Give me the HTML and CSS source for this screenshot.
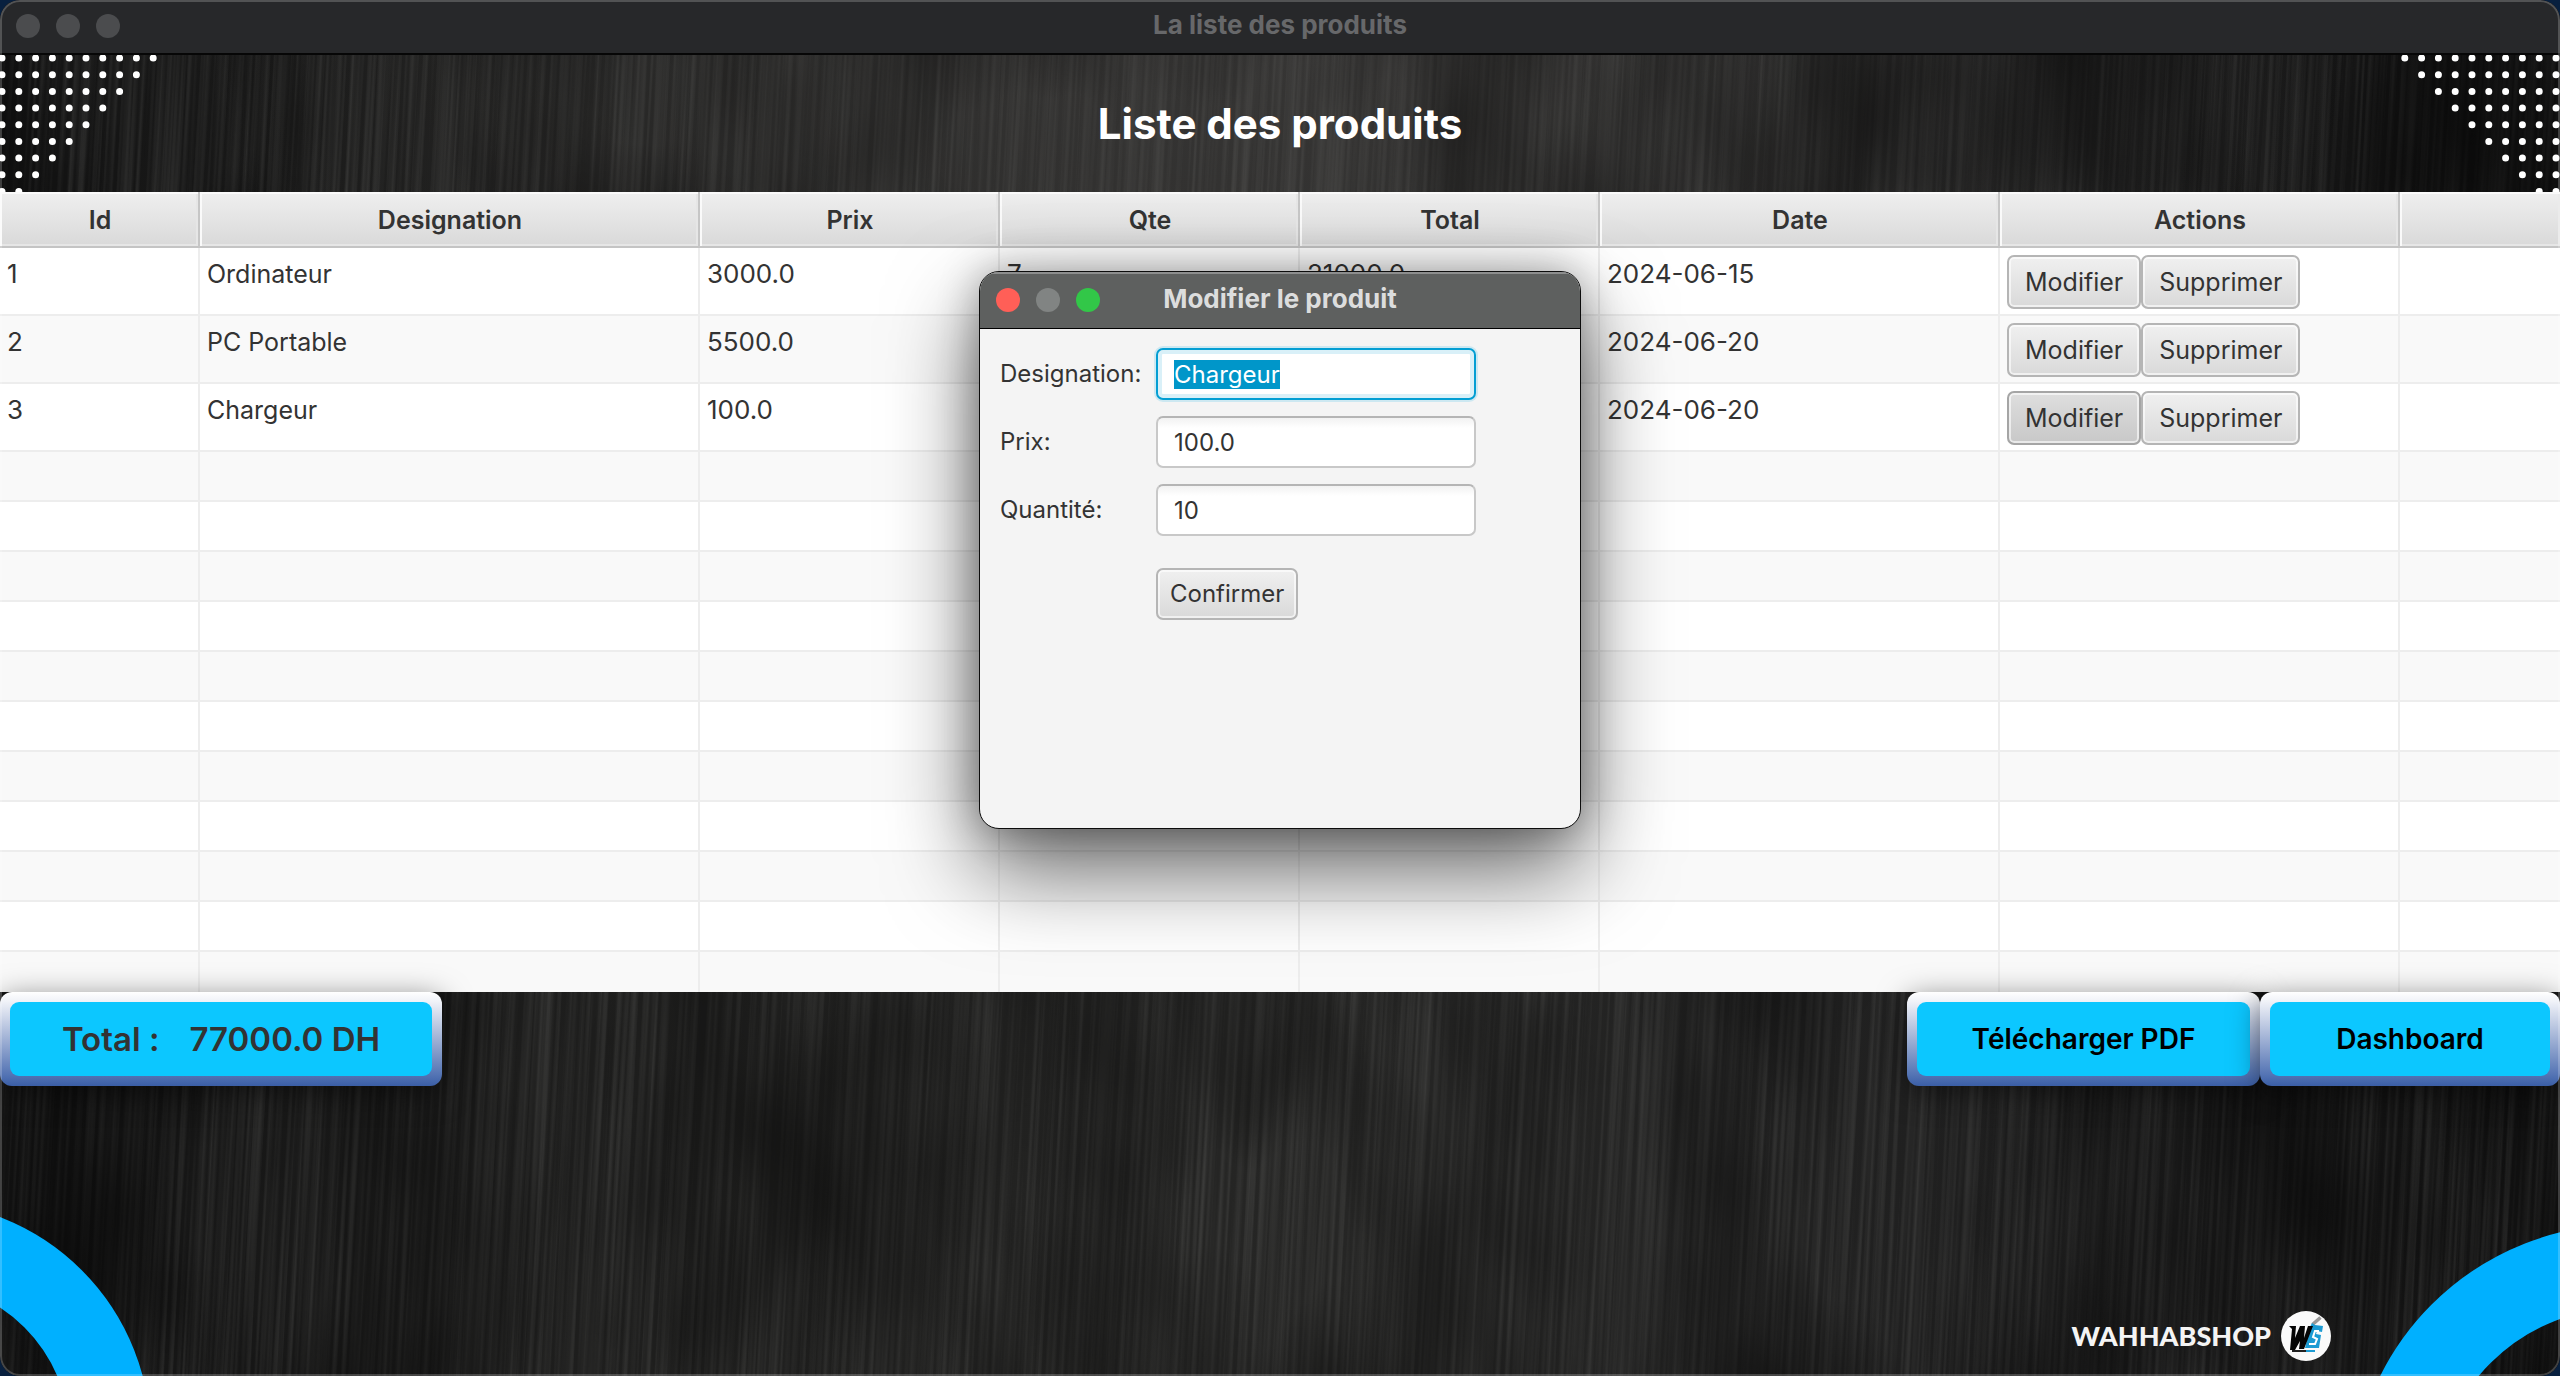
FILE: index.html
```html
<!DOCTYPE html>
<html lang="fr">
<head>
<meta charset="utf-8">
<title>La liste des produits</title>
<link rel="stylesheet" href="styles.css">
</head>
<body>
<main class="window">
  <svg class="wood" aria-hidden="true">
    <defs>
      <filter id="grain" x="0" y="0" width="100%" height="100%" color-interpolation-filters="sRGB">
        <feTurbulence type="fractalNoise" baseFrequency="0.22 0.0015" numOctaves="3" seed="8"/>
        <feColorMatrix type="matrix" values="0 0 0 0 0.45  0 0 0 0 0.45  0 0 0 0 0.44  1 0 0 0 -0.36"/>
      </filter>
      <filter id="clouds" x="0" y="0" width="100%" height="100%" color-interpolation-filters="sRGB">
        <feTurbulence type="fractalNoise" baseFrequency="0.006 0.003" numOctaves="3" seed="3"/>
        <feColorMatrix type="matrix" values="0 0 0 0 0  0 0 0 0 0  0 0 0 0 0  0 1.6 0 0 -0.6"/>
      </filter>
    </defs>
    <rect class="grain" width="110%" height="100%" filter="url(#grain)"/>
    <rect width="100%" height="100%" filter="url(#clouds)"/>
  </svg>

  <header class="titlebar">
    <div class="lights"><i></i><i></i><i></i></div>
    <span class="titlebar-text">La liste des produits</span>
  </header>

  <section class="banner">
    <svg class="dots dots-left" width="170" height="137" aria-hidden="true">
      <g id="dots" fill="none" stroke="#fff" stroke-width="7" stroke-linecap="round" stroke-dasharray="0 16.8">
        <path d="M2 3H154M2 19.700H137M2 36.400H120M2 53H103M2 69.700H87M2 86.400H70M2 103H53M2 119.700H36M2 136.400H19"/>
      </g>
    </svg>
    <h1>Liste des produits</h1>
    <svg class="dots dots-right" width="170" height="137" viewBox="0 0 170 137" aria-hidden="true">
      <use href="#dots" transform="translate(168 0) scale(-1 1)"/>
    </svg>
  </section>

  <section class="table-wrap">
    <table>
      <colgroup><col class="w-id"><col class="w-name"><col class="w-num"><col class="w-num"><col class="w-num"><col class="w-wide"><col class="w-wide"><col></colgroup>
      <thead><tr><th>Id</th><th>Designation</th><th>Prix</th><th>Qte</th><th>Total</th><th>Date</th><th>Actions</th><th></th></tr></thead>
      <tbody>
        <tr class="data"><td>1</td><td>Ordinateur</td><td>3000.0</td><td>7</td><td>21000.0</td><td>2024-06-15</td><td><div class="actions"><button class="btn">Modifier</button><button class="btn">Supprimer</button></div></td><td></td></tr>
        <tr class="data"><td>2</td><td>PC Portable</td><td>5500.0</td><td>10</td><td>55000.0</td><td>2024-06-20</td><td><div class="actions"><button class="btn">Modifier</button><button class="btn">Supprimer</button></div></td><td></td></tr>
        <tr class="data"><td>3</td><td>Chargeur</td><td>100.0</td><td>10</td><td>1000.0</td><td>2024-06-20</td><td><div class="actions"><button class="btn pressed">Modifier</button><button class="btn">Supprimer</button></div></td><td></td></tr>
        <tr><td></td><td></td><td></td><td></td><td></td><td></td><td></td><td></td></tr>
        <tr><td></td><td></td><td></td><td></td><td></td><td></td><td></td><td></td></tr>
        <tr><td></td><td></td><td></td><td></td><td></td><td></td><td></td><td></td></tr>
        <tr><td></td><td></td><td></td><td></td><td></td><td></td><td></td><td></td></tr>
        <tr><td></td><td></td><td></td><td></td><td></td><td></td><td></td><td></td></tr>
        <tr><td></td><td></td><td></td><td></td><td></td><td></td><td></td><td></td></tr>
        <tr><td></td><td></td><td></td><td></td><td></td><td></td><td></td><td></td></tr>
        <tr><td></td><td></td><td></td><td></td><td></td><td></td><td></td><td></td></tr>
        <tr><td></td><td></td><td></td><td></td><td></td><td></td><td></td><td></td></tr>
        <tr><td></td><td></td><td></td><td></td><td></td><td></td><td></td><td></td></tr>
        <tr><td></td><td></td><td></td><td></td><td></td><td></td><td></td><td></td></tr>
      </tbody>
    </table>
  </section>

  <footer class="bottom">
    <svg class="ring ring-left" width="160" height="170" aria-hidden="true"><circle cx="-84" cy="230" r="194" fill="none" stroke="#00b0ff" stroke-width="81"/></svg>
    <svg class="ring ring-right" width="190" height="160" aria-hidden="true"><circle cx="255" cy="282" r="232" fill="none" stroke="#00b0ff" stroke-width="83"/></svg>
    <div class="bar">
      <div class="glossy total"><span>Total :</span><output>77000.0 DH</output></div>
      <div class="links">
        <button class="glossy pdf">Télécharger PDF</button>
        <button class="glossy dash">Dashboard</button>
      </div>
    </div>
    <div class="brand">
      <span>WAHHABSHOP</span>
      <svg width="50" height="50" viewBox="0 0 50 50" aria-hidden="true">
        <circle cx="25" cy="25" r="25" fill="#fafafa"/>
        <path d="M31 13L39 6M32 14L40 7" stroke="#999" stroke-width="2" fill="none"/>
        <path d="M29 16L31 12L34 14L42 15L41 21L36 20L35 23L40 24L38 37H24Z" fill="#1c9bd3"/>
        <path d="M38 20H34L32 26L36 28L34 33H28" stroke="#fff" stroke-width="2" fill="none"/>
        <path d="M8 15H15L14 27L19 15H24L23 27L27 15H32L23 38H18L19 30L14 39H9L11 18Z" fill="#050505"/>
        <path d="M11 40H25" stroke="#222" stroke-width="2"/><path d="M25 40H34" stroke="#1c9bd3" stroke-width="2"/>
      </svg>
    </div>
  </footer>
</main>

<section class="dialog" role="dialog" aria-labelledby="dialog-title">
  <header class="dialog-bar">
    <div class="lights"><i class="red"></i><i class="gray"></i><i class="green"></i></div>
    <h2 id="dialog-title">Modifier le produit</h2>
  </header>
  <form class="form">
    <label for="designation">Designation:</label><input id="designation" type="text" value="Chargeur">
    <label for="prix">Prix:</label><input id="prix" type="text" value="100.0">
    <label for="quantite">Quantité:</label><input id="quantite" type="text" value="10">
    <button class="btn confirm" type="button">Confirmer</button>
  </form>
</section>
<script src="script.js"></script>
</body>
</html>
```
FILE: script.js
```js
const field = document.getElementById("designation");
field.focus();
field.select();
```
FILE: styles.css
```css
* { box-sizing: border-box; }
html, body { height: 100%; }
body {
  margin: 0;
  position: relative;
  background: #08203f;
  color: #333;
  font: 26px/34px Inter, "Liberation Sans", sans-serif;
  overflow: hidden;
}
h1, h2 { margin: 0; }
button { font: inherit; color: inherit; }

.window {
  position: relative;
  min-height: 100%;
  height: 100%;
  display: flex;
  flex-direction: column;
  border-radius: 20px;
  overflow: hidden;
  background:
    radial-gradient(ellipse 42% 60% at 50% 0, #373635 0, rgba(55, 54, 53, 0) 100%),
    linear-gradient(90deg, #141414, #212120 30%, #262625 52%, #202020 75%, #111);
}
.window::after {
  content: "";
  position: absolute;
  inset: 0;
  border: 2px solid rgba(255, 255, 255, 0.2);
  border-radius: 20px;
  pointer-events: none;
}
.wood { position: absolute; inset: 0; width: 100%; height: 100%; opacity: 0.55; }
.grain { transform: skewX(-3deg); transform-origin: 0 0; }

.titlebar {
  position: relative;
  height: 55px;
  flex: none;
  background: #27282a;
  border-bottom: 2px solid #060606;
  display: grid;
  justify-items: center;
}
.titlebar-text { color: #67686a; font-weight: 700; line-height: 50px; }
.lights { position: absolute; left: 16px; top: 14px; display: flex; gap: 16px; }
.lights i { width: 24px; height: 24px; border-radius: 50%; background: #4b4c4e; }

.banner { position: relative; height: 137px; flex: none; display: grid; place-items: center; }
.banner h1 { color: #fff; font-size: 42px; line-height: 56px; }
.dots { position: absolute; top: 0; }
.dots-left { left: 0; }
.dots-right { right: 0; }

.table-wrap { position: relative; flex: 1; min-height: 0; overflow: hidden; background: #fff; }
table { width: 100%; table-layout: fixed; border-collapse: separate; border-spacing: 0; }
.w-id { width: 200px; }
.w-name { width: 500px; }
.w-num { width: 300px; }
.w-wide { width: 400px; }
th {
  height: 56px;
  padding: 2px 0 0 2px;
  font-size: 25px;
  font-weight: 600;
  background: linear-gradient(#efefef, #d9d9d9);
  border-right: 2px solid #c6c6c6;
  border-bottom: 2px solid #c4c4c4;
  box-shadow: inset 2px 2px #fafafa, inset -2px -2px #e6e6e6;
}
td {
  height: 50px;
  padding: 0 0 0 7px;
  vertical-align: top;
  border-right: 2px solid #ededed;
  border-bottom: 2px solid #ededed;
}
th:last-child, td:last-child { border-right: 0; }
tbody tr:nth-child(even) { background: #f9f9f9; }
.data td { height: 68px; padding-top: 9px; }
.data td:nth-child(2) { font-size: 25px; }
.data td:nth-child(7) { padding-top: 7px; }
.actions { display: flex; }
.btn {
  height: 54px;
  padding: 0 16px;
  border: 2px solid #b5b5b5;
  border-radius: 7px;
  background: linear-gradient(#f0f0f0, #d9d9d9);
  box-shadow: inset 0 0 0 2px rgba(255, 255, 255, 0.6);
  font-size: 25px;
}
.btn.pressed { background: linear-gradient(#dedede, #c8c8c8); border-color: #a5a5a5; }

.bottom { position: relative; height: 384px; flex: none; }
.bar { display: flex; justify-content: space-between; }
.links { display: flex; }
.glossy {
  position: relative;
  isolation: isolate;
  height: 94px;
  border: 0;
  border-radius: 12px;
  background: linear-gradient(#fff, #f0f2f8 10%, #5474b4 88%, #3a5ea6);
  box-shadow: 0 6px 30px rgba(0, 0, 0, 0.5);
  font-weight: 600;
}
.glossy::before {
  content: "";
  position: absolute;
  z-index: -1;
  inset: 10px;
  border-radius: 9px;
  background: #0cc7ff;
}
.total { width: 442px; display: flex; align-items: center; justify-content: center; gap: 30px; font-size: 33px; }
.pdf, .dash { color: #000; font-size: 28px; padding: 0; }
.pdf { width: 353px; }
.dash { width: 300px; }
.ring { position: absolute; bottom: 0; }
.ring-left { left: 0; }
.ring-right { right: 0; }
.brand {
  position: absolute;
  right: 229px;
  bottom: 15px;
  display: flex;
  align-items: center;
  gap: 10px;
  color: #f4f4f4;
  font: 900 27px/50px Lato, sans-serif;
}

.dialog {
  position: absolute;
  top: 271px;
  left: 0;
  right: 0;
  width: 602px;
  margin: 0 auto;
  min-height: 558px;
  border: 1px solid #0c0c0c;
  border-radius: 20px;
  background: #f4f4f4;
  overflow: hidden;
  box-shadow: 0 40px 90px rgba(0, 0, 0, 0.6), 0 0 40px rgba(0, 0, 0, 0.3);
}
.dialog-bar {
  position: relative;
  height: 57px;
  background: #5e605f;
  border-bottom: 1px solid #000;
  box-shadow: inset 0 2px #8d8e8e;
  text-align: center;
}
.dialog-bar h2 { font-size: 26px; line-height: 54px; color: #dcdddd; }
.dialog-bar .lights { top: 16px; }
.lights .red { background: #ff5f57; }
.lights .gray { background: #818483; }
.lights .green { background: #32c748; }
.form {
  display: grid;
  grid-template-columns: 136px 320px;
  gap: 16px 20px;
  align-items: center;
  padding: 19px 20px;
}
.form label { font-size: 24px; }
.form input {
  width: 320px;
  height: 52px;
  padding: 0 16px;
  border: 2px solid #c8c8c8;
  border-top-color: #b5b5b5;
  border-radius: 7px;
  background: linear-gradient(#f2f2f2, #fff 10px);
  color: #333;
  font: inherit;
  font-size: 24px;
  outline: 0;
}
.form input:focus {
  border-color: #039ed3;
  background: #fff;
  box-shadow: inset 0 0 0 4px #d9f0f8, 0 0 0 2px #cde8f1;
}
.form input::selection { background: #0096c9; color: #fff; }
.form .confirm { grid-column: 2; justify-self: start; height: 52px; margin-top: 16px; padding: 0 12px; font-size: 24px; }
```
